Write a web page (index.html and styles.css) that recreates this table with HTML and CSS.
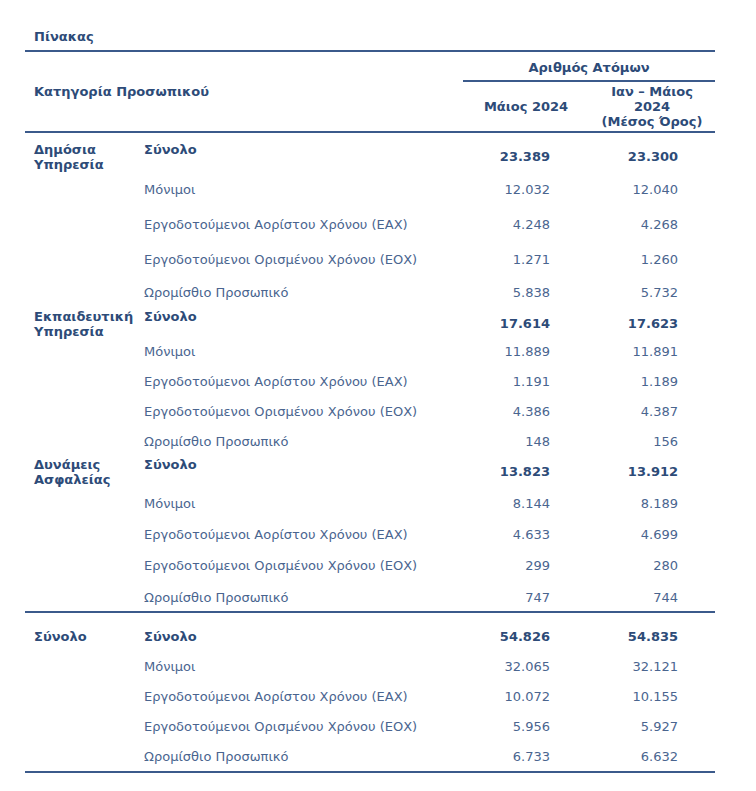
FILE: index.html
```html
<!DOCTYPE html>
<html lang="el">
<head>
<meta charset="utf-8">
<title>Πίνακας</title>
<link rel="stylesheet" href="styles.css">
</head>
<body>
<div class="wrap">
  <div class="caption">Πίνακας</div>
  <table class="tbl">
    <colgroup>
      <col class="c1"><col class="c2"><col class="c3"><col class="c4">
    </colgroup>
    <thead>
      <tr class="hA">
        <th class="cat" colspan="2" rowspan="2">Κατηγορία Προσωπικού</th>
        <th class="grp" colspan="2">Αριθμός Ατόμων</th>
      </tr>
      <tr class="hB">
        <th class="per">Μάιος 2024</th>
        <th class="per">Ιαν – Μάιος<br>2024<br>(Μέσος Όρος)</th>
      </tr>
    </thead>
    <tbody>
      <tr class="first r49">
        <td class="g" rowspan="5">Δημόσια<br>Υπηρεσία</td>
        <td class="lab b">Σύνολο</td>
        <td class="num b low">23.389</td>
        <td class="num n2 b low">23.300</td>
      </tr>
      <tr class="r35"><td class="lab">Μόνιμοι</td><td class="num">12.032</td><td class="num n2">12.040</td></tr>
      <tr class="r35"><td class="lab">Εργοδοτούμενοι Αορίστου Χρόνου (ΕΑΧ)</td><td class="num">4.248</td><td class="num n2">4.268</td></tr>
      <tr class="r33"><td class="lab">Εργοδοτούμενοι Ορισμένου Χρόνου (ΕΟΧ)</td><td class="num">1.271</td><td class="num n2">1.260</td></tr>
      <tr class="r24"><td class="lab">Ωρομίσθιο Προσωπικό</td><td class="num">5.838</td><td class="num n2">5.732</td></tr>

      <tr class="r35">
        <td class="g" rowspan="5">Εκπαιδευτική<br>Υπηρεσία</td>
        <td class="lab b">Σύνολο</td>
        <td class="num b low">17.614</td>
        <td class="num n2 b low">17.623</td>
      </tr>
      <tr class="r30"><td class="lab">Μόνιμοι</td><td class="num">11.889</td><td class="num n2">11.891</td></tr>
      <tr class="r30"><td class="lab">Εργοδοτούμενοι Αορίστου Χρόνου (ΕΑΧ)</td><td class="num">1.191</td><td class="num n2">1.189</td></tr>
      <tr class="r30"><td class="lab">Εργοδοτούμενοι Ορισμένου Χρόνου (ΕΟΧ)</td><td class="num">4.386</td><td class="num n2">4.387</td></tr>
      <tr class="r23"><td class="lab">Ωρομίσθιο Προσωπικό</td><td class="num">148</td><td class="num n2">156</td></tr>

      <tr class="r39">
        <td class="g end" rowspan="5">Δυνάμεις<br>Ασφαλείας</td>
        <td class="lab b">Σύνολο</td>
        <td class="num b low">13.823</td>
        <td class="num n2 b low">13.912</td>
      </tr>
      <tr class="r31"><td class="lab">Μόνιμοι</td><td class="num">8.144</td><td class="num n2">8.189</td></tr>
      <tr class="r31"><td class="lab">Εργοδοτούμενοι Αορίστου Χρόνου (ΕΑΧ)</td><td class="num">4.633</td><td class="num n2">4.699</td></tr>
      <tr class="r32"><td class="lab">Εργοδοτούμενοι Ορισμένου Χρόνου (ΕΟΧ)</td><td class="num">299</td><td class="num n2">280</td></tr>
      <tr class="r23 end"><td class="lab">Ωρομίσθιο Προσωπικό</td><td class="num">747</td><td class="num n2">744</td></tr>

      <tr class="total r46">
        <td class="g end" rowspan="5">Σύνολο</td>
        <td class="lab b">Σύνολο</td>
        <td class="num b">54.826</td>
        <td class="num n2 b">54.835</td>
      </tr>
      <tr class="r30"><td class="lab">Μόνιμοι</td><td class="num">32.065</td><td class="num n2">32.121</td></tr>
      <tr class="r30"><td class="lab">Εργοδοτούμενοι Αορίστου Χρόνου (ΕΑΧ)</td><td class="num">10.072</td><td class="num n2">10.155</td></tr>
      <tr class="r30"><td class="lab">Εργοδοτούμενοι Ορισμένου Χρόνου (ΕΟΧ)</td><td class="num">5.956</td><td class="num n2">5.927</td></tr>
      <tr class="r24 end"><td class="lab">Ωρομίσθιο Προσωπικό</td><td class="num">6.733</td><td class="num n2">6.632</td></tr>
    </tbody>
  </table>
</div>
</body>
</html>
```

FILE: styles.css
```css
html, body {
  margin: 0;
  padding: 0;
  background: #ffffff;
}

body {
  font-family: "DejaVu Sans", Verdana, sans-serif;
  font-size: 13px;
  line-height: 15px;
  color: #4a658f;
}

.wrap {
  padding: 29px 0 0 25px;
  width: 690px;
}

.caption {
  font-weight: bold;
  color: #2d4b78;
  padding: 0 0 6px 9px;
  border-bottom: 2px solid #3b5a8b;
}

.tbl {
  width: 690px;
  table-layout: fixed;
  border-collapse: separate;
  border-spacing: 0;
}

.c1 { width: 110px; }
.c2 { width: 328px; }
.c3 { width: 126px; }
.c4 { width: 126px; }

.tbl th {
  font-weight: bold;
  color: #2d4b78;
  padding: 0;
}

.tbl th.cat {
  text-align: left;
  vertical-align: middle;
  padding-left: 9px;
  border-bottom: 2px solid #3b5a8b;
}

.tbl th.grp {
  text-align: center;
  vertical-align: top;
  height: 20px;
  padding: 8px 0 0 0;
  border-bottom: 2px solid #3b5a8b;
}

.tbl th.per {
  text-align: center;
  vertical-align: middle;
  height: 49px;
  border-bottom: 2px solid #3b5a8b;
}

.tbl td {
  padding: 0;
  vertical-align: top;
}

.tbl td.g {
  font-weight: bold;
  color: #2d4b78;
  padding-left: 9px;
}

.tbl td.lab {
  padding-left: 9px;
  white-space: nowrap;
}

.tbl td.num {
  text-align: right;
  padding-right: 39px;
}

.tbl td.num.n2 {
  padding-right: 37px;
}

.tbl td.b {
  font-weight: bold;
  color: #2d4b78;
}

.tbl td.low {
  padding-top: 7px;
}

.tbl tr.first td {
  padding-top: 9px;
}

.tbl tr.first td.low {
  padding-top: 16px;
}

.tbl tr.total td {
  padding-top: 16px;
}

.tbl td.end,
.tbl tr.end td {
  border-bottom: 2px solid #3b5a8b;
}

.r23 { height: 23px; }
.r24 { height: 24px; }
.r30 { height: 30px; }
.r31 { height: 31px; }
.r32 { height: 32px; }
.r33 { height: 33px; }
.r35 { height: 35px; }
.r39 { height: 39px; }
.r46 { height: 46px; }
.r49 { height: 49px; }
```
